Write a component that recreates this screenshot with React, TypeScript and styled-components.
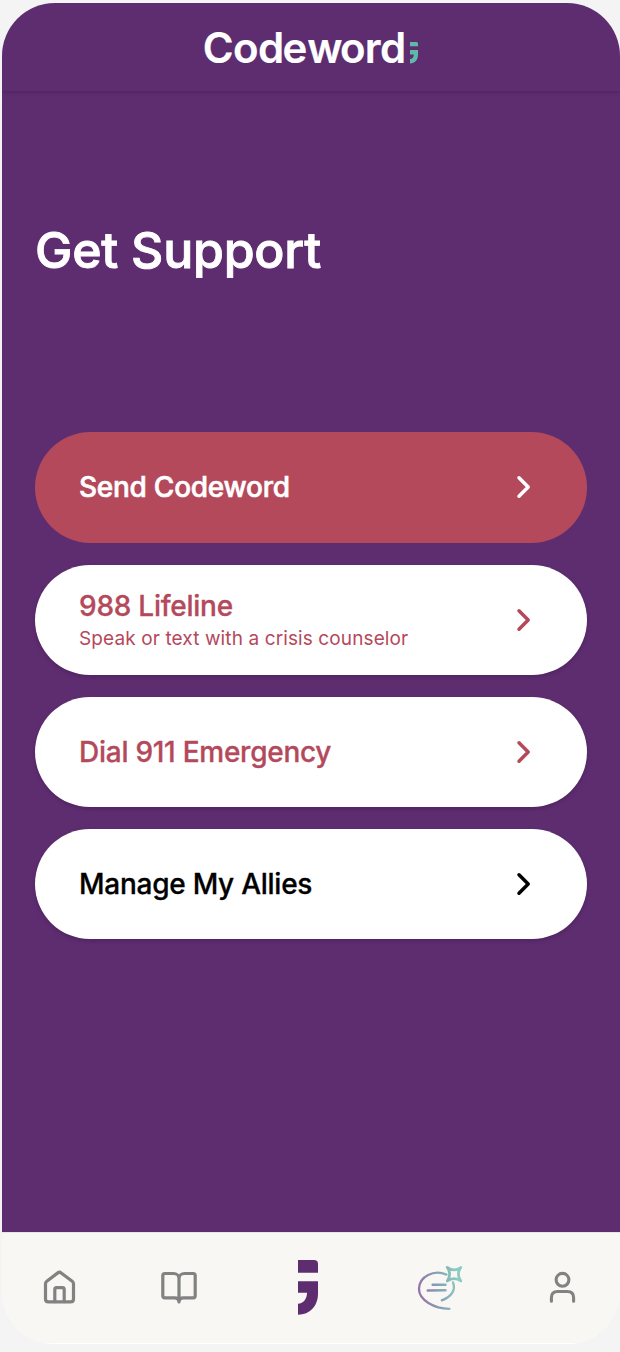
import React from "react";
import styled, { createGlobalStyle } from "styled-components";

const GlobalStyle = createGlobalStyle`
  * { box-sizing: border-box; }
  body { margin: 0; background: #f4f4f4; font-family: Inter, "Liberation Sans", sans-serif; }
`;

const Page = styled.div`
  width: 620px;
  height: 1352px;
  padding: 3px 0 8px 2px;
  overflow: hidden;
`;

const Phone = styled.div`
  display: flex;
  flex-direction: column;
  width: 618px;
  height: 1341px;
  border-radius: 53px;
  overflow: hidden;
  background: #fff;
`;

const Header = styled.header`
  position: relative;
  display: flex;
  justify-content: center;
  height: 88px;
  flex: none;
  padding: 17px 0 0 2px;
  background: #5e2d70;
  box-shadow: 0 1px 4px rgba(30, 5, 45, 0.25);
`;

const Logo = styled.svg`
  display: block;
  width: 220px;
  height: 56px;
`;

const Main = styled.main`
  flex: 1;
  padding: 0 33px;
  background: #5e2d70;
`;

const Title = styled.h1`
  margin: 0;
  padding-top: 129px;
  height: 341px;
  line-height: 60px;
  font-size: 50px;
  font-weight: 500;
  letter-spacing: -0.25px;
  color: #fff;
  -webkit-text-stroke: 0.9px currentColor;
  white-space: nowrap;
`;

const Actions = styled.div`
  display: flex;
  flex-direction: column;
  gap: 22px;
`;

const Action = styled.button<{ $bg: string; $fg: string; $flat?: boolean }>`
  display: flex;
  align-items: center;
  justify-content: space-between;
  width: 552px;
  height: ${(p) => (p.$flat ? 111 : 110)}px;
  padding: 0 56px ${(p) => (p.$flat ? 1 : 0)}px 44px;
  border: 0;
  border-radius: 56px;
  font-family: inherit;
  text-align: left;
  background: ${(p) => p.$bg};
  color: ${(p) => p.$fg};
  box-shadow: ${(p) => (p.$flat ? "none" : "0 2px 4px rgba(30, 5, 45, 0.22)")};
`;

const Label = styled.div<{ $stroke: number }>`
  font-size: 28px;
  line-height: 34px;
  font-weight: 500;
  letter-spacing: -0.26px;
  -webkit-text-stroke: ${(p) => p.$stroke}px currentColor;
  white-space: nowrap;
`;

const Hint = styled.div`
  font-size: 19px;
  line-height: 24px;
  margin-top: 4px;
  letter-spacing: 0.11px;
  white-space: nowrap;
`;

const Icon = styled.svg`
  display: block;
  flex: none;
  fill: none;
  stroke: currentColor;
  stroke-linecap: round;
  stroke-linejoin: round;
`;

const Nav = styled.nav`
  display: grid;
  grid-template-columns: 115px 124px 134px 130px 115px;
  height: 112px;
  flex: none;
  background: #f8f7f3;
  border-top: 1px solid #e6e4e6;
  border-bottom: 1px solid #fff;
`;

const NavItem = styled.a`
  display: flex;
  justify-content: center;
  align-items: center;
  height: 109px;
  color: #828282;
`;

const Chevron = () => (
  <Icon width="16" height="26" viewBox="0 0 16 26" strokeWidth="3.5">
    <path d="M4 3.8L13.2 13L4 22.2" />
  </Icon>
);

const actions = [
  { label: "Send Codeword", bg: "#b4495c", fg: "#fff", stroke: 0.6, flat: true },
  { label: "988 Lifeline", hint: "Speak or text with a crisis counselor", bg: "#fff", fg: "#b4495c", stroke: 0.3 },
  { label: "Dial 911 Emergency", bg: "#fff", fg: "#b4495c", stroke: 0.3 },
  { label: "Manage My Allies", bg: "#fff", fg: "#000", stroke: 0.3 },
];

export default function App() {
  return (
    <Page>
      <GlobalStyle />
      <Phone>
        <Header>
          <Logo viewBox="0 0 220 56">
            <text
              x="0.8 31 56 80.6 105.2 138 162.8 178"
              y="43.4"
              fontFamily="Inter"
              fontSize="42"
              fontWeight="600"
              fill="#fff"
              stroke="#fff"
              strokeWidth="0.2"
            >
              Codeword
            </text>
            <path
              fill="#60b8ab"
              d="M208 22H214.5Q216 22 216 23.5V26.3H208ZM208 30H216V34.5C216 40 213 43.5 208 43.5V39C210.5 39 211.8 37 211.8 34.5H208Z"
            />
          </Logo>
        </Header>
        <Main>
          <Title>Get Support</Title>
          <Actions>
            {actions.map((a) => (
              <Action key={a.label} $bg={a.bg} $fg={a.fg} $flat={a.flat}>
                <div>
                  <Label $stroke={a.stroke}>{a.label}</Label>
                  {a.hint && <Hint>{a.hint}</Hint>}
                </div>
                <Chevron />
              </Action>
            ))}
          </Actions>
        </Main>
        <Nav>
          <NavItem>
            <Icon width="33" height="36" viewBox="0 0 33 36" strokeWidth="3.2">
              <path d="M2.5 13.8Q2.5 12.2 3.8 11.2L14.8 2.9Q16.5 1.6 18.2 2.9L29.2 11.2Q30.5 12.2 30.5 13.8V28.9Q30.5 31.9 27.5 31.9H5.5Q2.5 31.9 2.5 28.9Z" />
              <path d="M11.8 31.6V19.4Q11.8 17.6 13.6 17.6H19.4Q21.2 17.6 21.2 19.4V31.6" />
            </Icon>
          </NavItem>
          <NavItem>
            <Icon width="38" height="36" viewBox="0 0 38 36" strokeWidth="3.2">
              <path d="M19 8.5C19 5.5 16.5 3.5 13.5 3.5H4.8Q2.8 3.5 2.8 5.5V25.8Q2.8 27.8 4.8 27.8H14.5Q19 27.8 19 32Q19 27.8 23.5 27.8H33.2Q35.2 27.8 35.2 25.8V5.5Q35.2 3.5 33.2 3.5H24.5C21.5 3.5 19 5.5 19 8.5V31.5" />
            </Icon>
          </NavItem>
          <NavItem>
            <svg width="20" height="55" viewBox="0 0 20 55" fill="#5e2d70">
              <path d="M0 0H16Q20 0 20 4V12.7H0Z" />
              <path d="M0 21.3H20V33.5C20 46 12 54.7 0 54.7V43.7C5.5 43.2 9 39 9 32.7H0Z" />
            </svg>
          </NavItem>
          <NavItem>
            <Icon width="48" height="48" viewBox="0 0 48 48" strokeWidth="2.3">
              <defs>
                <linearGradient id="chat" gradientUnits="userSpaceOnUse" x1="2" y1="26" x2="42" y2="20">
                  <stop offset="0" stopColor="#9671a5" />
                  <stop offset="0.55" stopColor="#83a5b7" />
                  <stop offset="1" stopColor="#8ccbbf" />
                </linearGradient>
              </defs>
              <g stroke="url(#chat)">
                <path d="M30.5 10.6C18 5 3 12.5 3 25C3 36 18 44.5 33.5 44.8" />
                <path d="M37 18.4C40 26 35.5 33 25.8 36.4" />
                <path d="M16.7 20.8L29.5 20.7M11.8 26.4L29.5 26.3" strokeWidth="2.5" />
                <path d="M31.2 3.3Q38 8.5 44.8 3.5Q40 10.2 44.8 17Q38 12.2 31.3 17Q36 10.2 31.2 3.3Z" strokeWidth="2.7" />
              </g>
            </Icon>
          </NavItem>
          <NavItem>
            <Icon width="27" height="36" viewBox="0 0 27 36" strokeWidth="3.1">
              <circle cx="13.5" cy="9.8" r="6.4" />
              <path d="M2.4 31.2V27.7Q2.4 21.5 8.6 21.5H18.4Q24.6 21.5 24.6 27.7V31.2" />
            </Icon>
          </NavItem>
        </Nav>
      </Phone>
    </Page>
  );
}
